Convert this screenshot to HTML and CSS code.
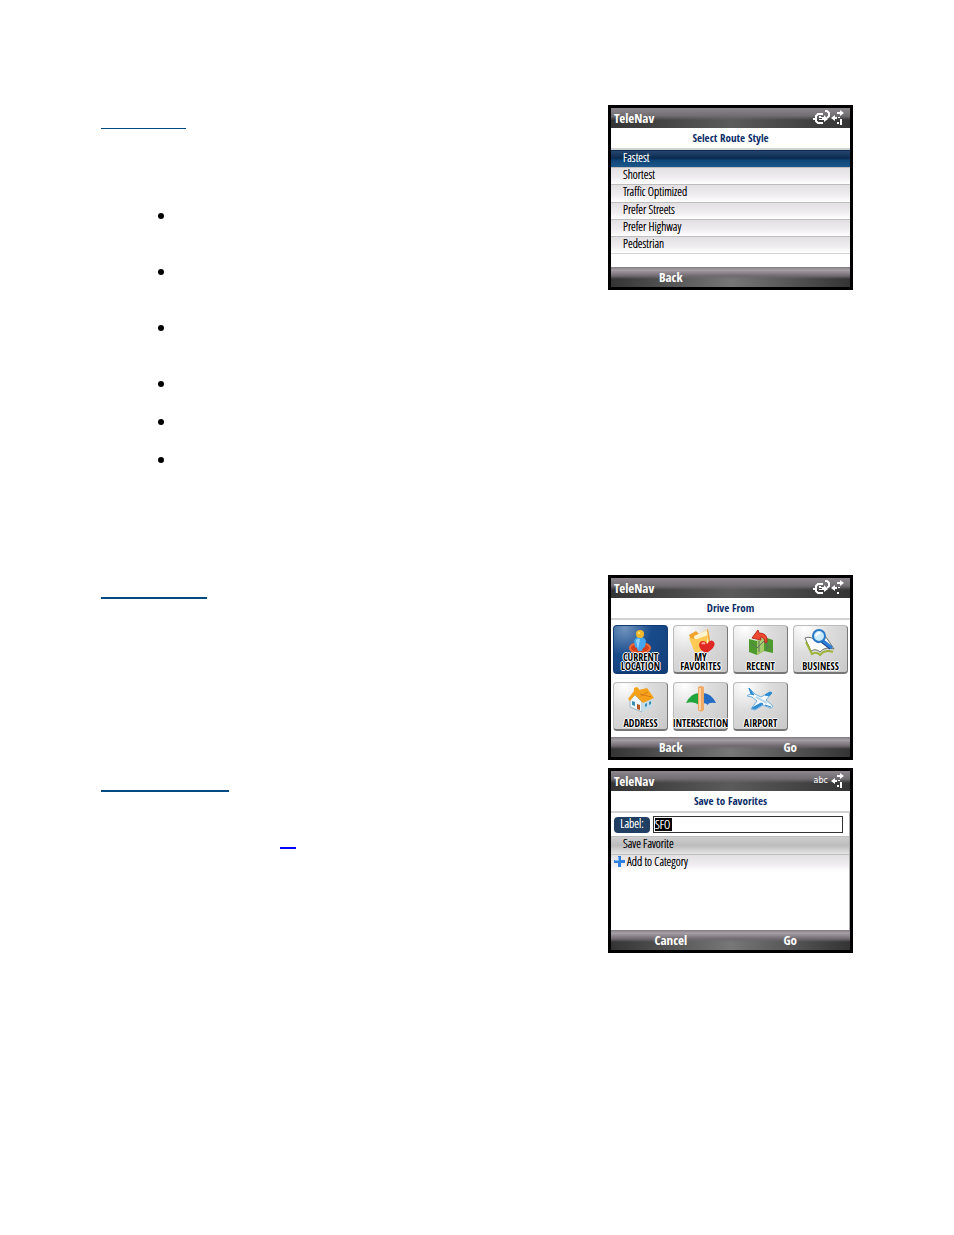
FILE: index.html
```html
<!DOCTYPE html>
<html lang="en">
<head>
<meta charset="utf-8">
<title>TeleNav</title>
<link rel="stylesheet" href="styles.css">
</head>
<body>
<svg class="defs" width="0" height="0" aria-hidden="true">
  <defs>
    <symbol id="arrows" viewBox="0 0 13 16">
      <path fill="#fff" d="M6 2h3V0l4 3-4 3V4H6zM6 7H4V5L0 8l4 3V9h2z"/>
    </symbol>
    <symbol id="signal" viewBox="0 0 13 16">
      <use href="#arrows"/>
      <path fill="#fff" d="M6 12h2v2H6zM9 9h2v6H9zM7 7h2v1H7z"/>
    </symbol>
    <symbol id="signal-low" viewBox="0 0 13 16">
      <use href="#arrows"/>
      <path fill="#fff" d="M6 12h2v2H6zM7 7h2v1H7z"/>
    </symbol>
    <symbol id="plug" viewBox="0 0 18 16">
      <path fill="none" stroke="#fff" stroke-width="2" d="M10 4H5L3 6v5l2 2h5M0 9h2M12 1h2l2 2v3l-2 2"/>
      <path fill="#fff" d="M6 6h2v1h3V5l4 4-4 3v-2H6V9h3V8H6z"/>
    </symbol>
  </defs>
</svg>
<main class="page">
  <section class="topic topic-tall">
    <div class="copy">
      <h2 class="rule rule-short"></h2>
      <ul class="bullets">
        <li class="deep"></li><li class="deep"></li><li class="deep"></li><li></li><li></li><li></li>
      </ul>
    </div>
    <div class="device">
      <header class="bar"><span>TeleNav</span><span class="status"><svg width="18" height="16"><use href="#plug"/></svg><svg width="13" height="16"><use href="#signal"/></svg></span></header>
      <h3 class="title">Select Route Style</h3>
      <div class="list">
        <button class="row chosen">Fastest</button>
        <button class="row">Shortest</button>
        <button class="row">Traffic Optimized</button>
        <button class="row">Prefer Streets</button>
        <button class="row">Prefer Highway</button>
        <button class="row">Pedestrian</button>
      </div>
      <footer class="keys"><button>Back</button><span></span></footer>
    </div>
  </section>

  <section class="topic">
    <div class="copy"><h2 class="rule rule-mid"></h2></div>
    <div class="device">
      <header class="bar"><span>TeleNav</span><span class="status"><svg width="18" height="16"><use href="#plug"/></svg><svg width="13" height="16"><use href="#signal-low"/></svg></span></header>
      <h3 class="title">Drive From</h3>
      <div class="tiles">
        <button class="tile active">
          <svg width="32" height="30" viewBox="0 0 32 30"><ellipse cx="16" cy="20" rx="10" ry="5" fill="#d5401c" stroke="#f16a35" stroke-width="2"/><path d="M10 13q1-4 6-4t6 4l-1 6-2 1-1 3h-4l-1-3-2-1z" fill="#43a6ee"/><path d="M12 12q2-2 4-1l-2 11z" fill="#91d4ff"/><circle cx="16" cy="6" r="4" fill="#f5bb2c"/><circle cx="15" cy="5" r="1" fill="#ffe88c"/></svg>
          <span>CURRENT LOCATION</span>
        </button>
        <button class="tile">
          <svg width="32" height="30" viewBox="0 0 32 30"><path d="M4 7l7-4 3 3 9-5 3 17-15 7z" fill="#f2a129"/><path d="M9 8l13-6 2 15-13 6z" fill="#fff4cf"/><path d="M4 10l8 1 11-4-2 14-11 4z" fill="#ffc955"/><path d="M21 25c-9-4-8-12-3-12q3 0 4 3 3-5 6-3c4 3 0 9-7 12z" fill="#df2724"/><path d="M17 16q1-2 3 0" fill="none" stroke="#ff9a8d" stroke-width="2"/></svg>
          <span>MY FAVORITES</span>
        </button>
        <button class="tile">
          <svg width="32" height="30" viewBox="0 0 32 30"><path d="M4 11l8 2 7-4 9 3v13l-9-2-7 4-8-3z" fill="#4c9b2c"/><path d="M12 13l7-4v14l-7 4z" fill="#a9ca6d"/><path d="M6 15l6 5 7-7 7 8M14 13v11M22 11v12" fill="none" stroke="#5e755f"/><path d="M20 15Q20 9 15 9l1 3-9-2 6-8 1 3q9 0 8 9z" fill="#f24a31" stroke="#b92d20"/></svg>
          <span>RECENT</span>
        </button>
        <button class="tile">
          <svg width="32" height="30" viewBox="0 0 32 30"><path d="M1 10l6 13q5-3 9 1 5-6 14-3l-8-12-8 6Q7 7 1 10z" fill="#fff" stroke="#6b7368"/><path d="M2 14l6 12q5-3 8 1 5-6 13-3" fill="none" stroke="#9bb437" stroke-width="2"/><path d="M18 13l9 7" stroke="#173e88" stroke-width="4"/><path d="M19 13l9 7" stroke="#2d7fd8" stroke-width="3"/><circle cx="15" cy="8" r="6" fill="#c9eafa" stroke="#2878c9" stroke-width="2"/><path d="M12 8q1-3 4-3" fill="none" stroke="#fff" stroke-width="2"/></svg>
          <span>BUSINESS</span>
        </button>
        <button class="tile">
          <svg width="32" height="30" viewBox="0 0 32 30"><path d="M5 14l5-4 7 7v10L5 22z" fill="#eef7fb" stroke="#9eb7c2"/><path d="M17 17l10-3v8l-10 5z" fill="#c5dde8"/><path d="M3 14l6-8V3l3-1 2 2v1l8-2 7 10-11 5-8-8-5 6z" fill="#f5a119"/><path d="M15 9l11 3M23 7l-7 4" stroke="#d97b16"/><path d="M7 16l3 1v4l-3-1zM20 19l2-1v3l-2 1zM24 17l2-1v3l-2 1z" fill="#3d8db3"/><path d="M12 19l3 1v5l-3-1z" fill="#b55920"/></svg>
          <span>ADDRESS</span>
        </button>
        <button class="tile">
          <svg width="32" height="30" viewBox="0 0 32 30"><path d="M14 8Q6 8 1 18q8-2 13 2z" fill="#20a43c"/><path d="M18 8q8 0 13 10-8-1-8 2-2-2-5-2z" fill="#256bc3"/><path d="M13 2q3-2 6 0v23q-3 3-6 0z" fill="#efaa68"/><path d="M15 3v22" stroke="#ffd09c" stroke-width="2"/></svg>
          <span>INTERSECTION</span>
        </button>
        <button class="tile">
          <svg width="32" height="30" viewBox="0 0 32 30"><path d="M4 3l6 6 6 3 9-5 2 1-6 7 6 5q2 3-2 3l-7-3-8 5-4-1 6-8-5-4-5-1 1-1 4-1z" fill="#f7fbff" stroke="#6fb0df"/><path d="M4 3l2 6 3 1zM7 23l9-5 2 1-8 5zM20 10l5-3 2 1-3 3zM20 20l6 2" fill="#2e8bd1" stroke="#2e8bd1"/><path d="M11 12l11 6" stroke="#b9d9ee" stroke-width="2"/></svg>
          <span>AIRPORT</span>
        </button>
      </div>
      <footer class="keys"><button>Back</button><button>Go</button></footer>
    </div>
  </section>

  <section class="topic">
    <div class="copy">
      <h2 class="rule rule-long"></h2>
      <a class="blank-link" href="#favorites" aria-label="Favorites"></a>
    </div>
    <div class="device" id="favorites">
      <header class="bar"><span>TeleNav</span><span class="status"><span class="mode">abc</span><svg width="13" height="16"><use href="#signal"/></svg></span></header>
      <h3 class="title">Save to Favorites</h3>
      <div class="scroll">
        <div class="field"><label for="label">Label:</label><div class="box"><input id="label" value="SFO" size="3"></div></div>
        <div class="list pair">
          <button class="row focus">Save Favorite</button>
          <button class="row add"><svg width="11" height="11" viewBox="0 0 11 11"><path d="M4 0h3v4h4v3H7v4H4V7H0V4h4z" fill="#2f7fe0"/><path d="M4 1h1v4H1V4h3z" fill="#82bcff"/></svg>Add to Category</button>
        </div>
      </div>
      <footer class="keys"><button>Cancel</button><button>Go</button></footer>
    </div>
  </section>
</main>
</body>
</html>
```
FILE: styles.css
```css
* { box-sizing: border-box; }
body { margin: 0; background: #fff; }
button, input { margin: 0; padding: 0; border: 0; font: inherit; color: inherit; background: none; }
.defs { position: absolute; }

.page { padding: 105px 101px 80px; }
.topic { display: grid; grid-template-columns: 1fr 245px; align-items: start; min-height: 193px; }
.topic-tall { min-height: 470px; }

.rule { margin: 0; height: 24px; border-bottom: 2px solid #004a84; }
.rule-short { width: 85px; border-bottom-width: 1px; }
.rule-mid { width: 106px; }
.rule-long { width: 128px; }
.bullets { list-style: none; margin: 84px 0 0 57px; padding: 0; }
.bullets li { height: 38px; }
.bullets .deep { height: 56px; }
.bullets li::before { content: ""; display: block; width: 6px; height: 6px; border-radius: 50%; background: #000; }
.blank-link { display: block; width: 16px; height: 57px; margin-left: 179px; border-bottom: 2px solid #00f; }

.device {
  display: flex; flex-direction: column; height: 185px;
  border: 3px solid #000; background: #fff; color: #000;
  font: 300 12px/14px "Open Sans Condensed Light", "Liberation Sans Narrow", "Open Sans", sans-serif;
}
.bar, .title, .keys { font-family: "Open Sans Condensed", "Liberation Sans Narrow", sans-serif; font-weight: 700; }
.bar {
  display: flex; justify-content: space-between; align-items: center; height: 20px; padding: 0 6px 0 3px;
  background: linear-gradient(#8d878d, #706c70 40%, transparent 60%), linear-gradient(90deg, #343434, #5b5b5b 50%, #343434);
  color: #fff; font-size: 13px;
}
.status { display: flex; align-items: center; }
.mode { margin-right: 3px; font: 8px/12px "DejaVu Sans", sans-serif; }
.title { margin: 0; height: 22px; border-bottom: 2px solid #d2d2d2; color: #0c2d68; font-size: 11px; line-height: 20px; text-align: center; }
.list { display: flex; flex-direction: column; height: 104px; }
.pair { height: 35px; }
.row {
  display: flex; flex: 1; align-items: center; width: 100%; padding: 0 0 2px 12px; text-align: left;
  border-top: 1px solid #bdbdbd; background: linear-gradient(#e2e0e2, #f0edf0 60%, #fff);
}
.row, .field label, .box input { text-shadow: 0 0 currentColor; }
.list:not(.pair) .row:last-child { border-bottom: 1px solid #d4d4d4; }
.row.chosen { color: #fff; border-color: #0b2950; background: linear-gradient(#26476d, #0a2a51 45%, #104779 60%, #1b568b); }
.row.focus { background: linear-gradient(#cecece, #bcbcbc 50%, #e4e4e4); }
.row.add { gap: 2px; padding-left: 3px; }
.keys {
  display: grid; grid-template-columns: 1fr 1fr; align-items: center; height: 20px; margin-top: auto;
  background: linear-gradient(#827b82, #a69fa6 15%, #6f696f 45%, transparent 60%), linear-gradient(90deg, #343434, #777 50%, #343434);
  color: #fff; font-size: 13px;
}

.tiles { display: grid; grid-template-columns: repeat(4, minmax(0, 1fr)); grid-auto-rows: 49px; gap: 8px 5px; padding: 5px 2px; }
.tile {
  display: grid; grid-template-rows: 27px 18px; justify-items: center; align-items: end; justify-content: center;
  border: 1px solid #bcbcbc; border-right-color: #777; border-bottom: 2px solid #777; border-radius: 4px;
  background: radial-gradient(circle at 20% 5%, #fff, #ddd 40%, #c8c8c8);
  color: #000; font: 700 10px/9px "Open Sans Condensed", "Open Sans", sans-serif;
}
.tile svg { align-self: start; margin-top: 2px; }
.tile span { position: relative; width: min-content; text-shadow: 1px 0 #fff, -1px 0 #fff, 0 1px #fff, 0 -1px #fff; }
.tile.active { border-color: #123b74; background: radial-gradient(circle at 20% 5%, #7193bd, #184b8b 45%, #123d79); }

.scroll { flex: 1; border-right: 1px solid #aaa; }
.field { display: flex; gap: 3px; align-items: center; height: 23px; padding: 0 6px 0 3px; }
.field label { width: 36px; height: 16px; border-radius: 4px; background: #213f63; color: #fff; text-align: center; }
.box { flex: 1; height: 17px; padding: 1px; border: 1px solid #333; }
.box input { display: block; width: 17px; height: 13px; background: #000; color: #fff; }
```
